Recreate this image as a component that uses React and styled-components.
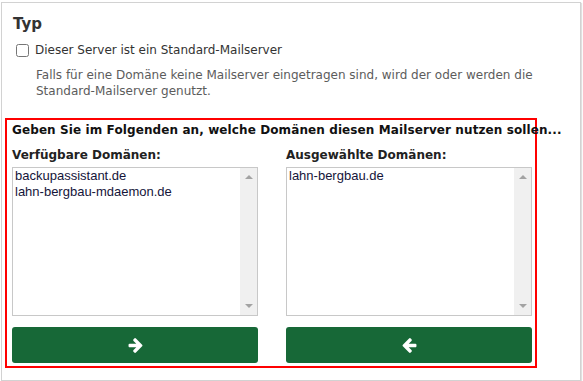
import React from "react";
import styled, { createGlobalStyle } from "styled-components";

const GlobalStyle = createGlobalStyle`
  html, body {
    margin: 0;
    padding: 0;
    background: #fff;
  }
  * {
    box-sizing: border-box;
  }
`;

const Panel = styled.div`
  margin: 2px 2px 0 1px;
  height: 379px;
  border: 1px solid #d2d2d2;
  box-shadow: 1px 1px 1px rgba(0, 0, 0, 0.12);
  background: #fff;
  font-family: "DejaVu Sans", Verdana, sans-serif;
  color: #333;
  overflow: hidden;
`;

const Title = styled.h3`
  margin: 11px 0 0 11px;
  font-size: 15px;
  line-height: 20px;
  font-weight: bold;
  color: #333;
`;

const CheckRow = styled.label`
  display: flex;
  align-items: center;
  height: 16px;
  margin: 8px 0 0 13px;
  font-size: 12px;
  line-height: 16px;
  color: #333;
`;

const Check = styled.input`
  width: 13px;
  height: 13px;
  margin: 0 6px 0 1px;
`;

const Help = styled.p`
  margin: 9px 30px 0 34px;
  font-size: 12px;
  line-height: 16px;
  color: #5c5c5c;
`;

const Highlight = styled.div`
  margin: 19px 0 0 3px;
  width: 532px;
  border: 2px solid #f00;
  padding: 2px 3px 3px 5px;
`;

const Lead = styled.div`
  font-size: 12px;
  line-height: 16px;
  font-weight: bold;
  letter-spacing: 0.1px;
  color: #111;
  white-space: nowrap;
`;

const Columns = styled.div`
  display: grid;
  grid-template-columns: 246px 246px;
  column-gap: 28px;
  margin-top: 9px;
`;

const Column = styled.div`
  display: flex;
  flex-direction: column;
`;

const ColumnLabel = styled.div`
  font-size: 12px;
  line-height: 16px;
  font-weight: bold;
  color: #222;
`;

const ListBox = styled.div`
  display: flex;
  height: 149px;
  margin-top: 4px;
  border: 1px solid #c8c8c8;
  background: #fff;
`;

const Items = styled.ul`
  flex: 1;
  margin: 0;
  padding: 0 0 0 2px;
  list-style: none;
  font-family: "Liberation Sans", Arial, sans-serif;
  font-size: 13px;
  line-height: 16px;
  color: #15153a;
`;

const Scrollbar = styled.div`
  width: 17px;
  background: #f0f0f0;
  display: flex;
  flex-direction: column;
  justify-content: space-between;
  align-items: center;
  padding: 7px 0 7px;
`;

const Arrow = styled.span`
  width: 0;
  height: 0;
  border-left: 4px solid transparent;
  border-right: 4px solid transparent;
  ${(p) =>
    p.$down
      ? "border-top: 4px solid #a3a3a3;"
      : "border-bottom: 4px solid #a3a3a3;"}
`;

const MoveButton = styled.button`
  display: flex;
  align-items: center;
  justify-content: center;
  height: 36px;
  margin-top: 11px;
  border: none;
  border-radius: 3px;
  background: #176837;
  color: #fff;
  cursor: pointer;
  padding: 0;
`;

const ArrowSvg = styled.svg`
  width: 15px;
  height: 15px;
  transform: ${(p) => (p.$left ? "scaleX(-1)" : "none")};
`;

// font-awesome 4 style arrow, pointing right
const BigArrow = ({ left }) => (
  <ArrowSvg viewBox="0 40 1472 1584" $left={left}>
    <path
      fill="currentColor"
      d="M1472 832q0 54-37 91l-651 651q-39 37-91 37-51 0-90-37l-75-75q-38-38-38-91t38-91l293-293H117q-52 0-84.5-37.5T0 896V768q0-53 32.5-90.5T117 640h704L528 346q-38-36-38-90t38-90l75-75q38-38 90-38 53 0 91 38l651 651q37 35 37 90z"
    />
  </ArrowSvg>
);

const available = ["backupassistant.de", "lahn-bergbau-mdaemon.de"];
const selected = ["lahn-bergbau.de"];

const DomainList = ({ label, items, left }) => (
  <Column>
    <ColumnLabel>{label}</ColumnLabel>
    <ListBox>
      <Items>
        {items.map((d) => (
          <li key={d}>{d}</li>
        ))}
      </Items>
      <Scrollbar>
        <Arrow />
        <Arrow $down />
      </Scrollbar>
    </ListBox>
    <MoveButton>
      <BigArrow left={left} />
    </MoveButton>
  </Column>
);

const App = () => {
  return (
    <>
      <GlobalStyle />
      <Panel>
        <Title>Typ</Title>
        <CheckRow>
          <Check type="checkbox" />
          Dieser Server ist ein Standard-Mailserver
        </CheckRow>
        <Help>
          Falls für eine Domäne keine Mailserver eingetragen sind, wird der
          oder werden die Standard-Mailserver genutzt.
        </Help>
        <Highlight>
          <Lead>
            Geben Sie im Folgenden an, welche Domänen diesen Mailserver nutzen
            sollen...
          </Lead>
          <Columns>
            <DomainList label="Verfügbare Domänen:" items={available} />
            <DomainList label="Ausgewählte Domänen:" items={selected} left />
          </Columns>
        </Highlight>
      </Panel>
    </>
  );
};

export default App;
